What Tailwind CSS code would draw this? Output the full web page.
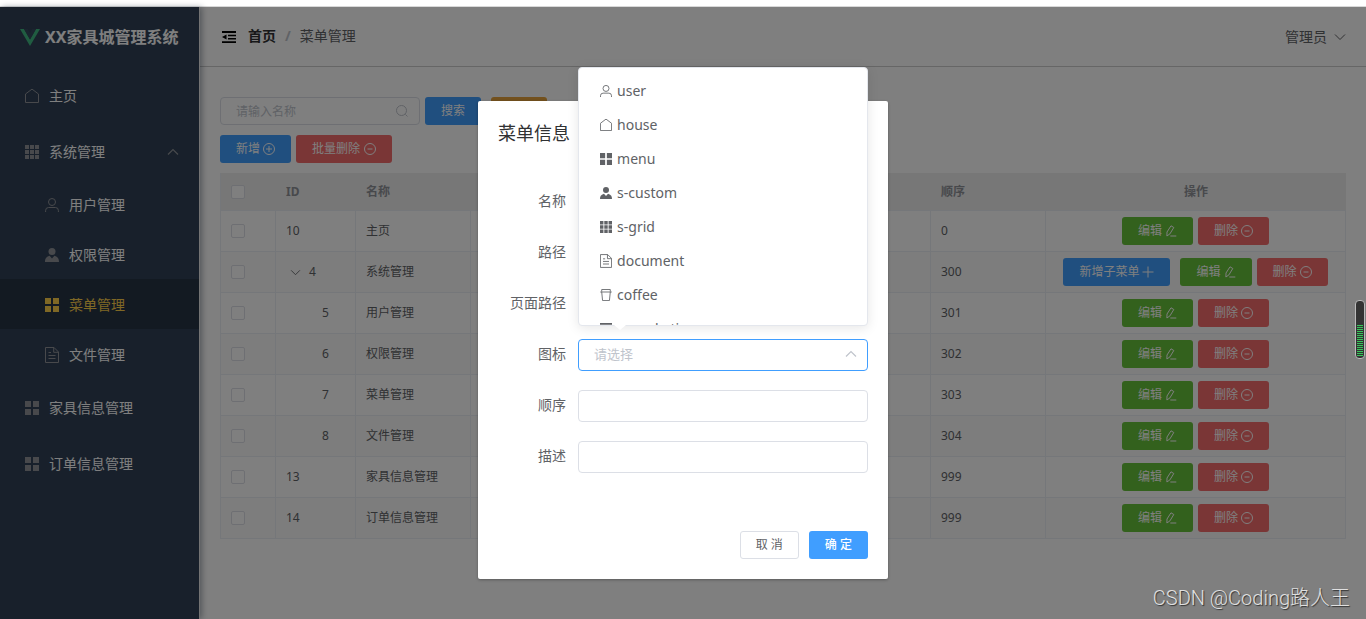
<!DOCTYPE html>
<html lang="zh-CN">
<head>
<meta charset="utf-8">
<meta name="viewport" content="width=device-width, initial-scale=1">
<title>XX家具城管理系统</title>
<script src="https://cdn.jsdelivr.net/npm/@tailwindcss/browser@4"></script>
</head>
<body class="flex min-h-screen flex-col bg-white font-['Noto_Sans','Noto_Sans_CJK_SC',sans-serif] text-sm text-[#606266]">

<svg class="hidden" aria-hidden="true">
  <symbol id="i-house" viewBox="0 0 14 14"><path d="M.5 13.500V5L7 .1 13.500 5v8.500z" fill="none" stroke="currentColor"/></symbol>
  <symbol id="i-user" viewBox="0 0 14 14"><g fill="none" stroke="currentColor"><circle cx="7" cy="4" r="3.500"/><path d="M.6 14v-1.500a3 3 0 0 1 3-3h6.800a3 3 0 0 1 3 3V14"/></g></symbol>
  <symbol id="i-custom" viewBox="0 0 14 14"><g fill="currentColor"><circle cx="7" cy="3.500" r="3.500"/><path d="M0 14c0-3 .8-5 4.600-6.200L7 10.400l2.400-2.600C13.200 9 14 11 14 14z"/></g></symbol>
  <symbol id="i-menu" viewBox="0 0 14 14"><path d="M0 0h6v6H0zM8 0h6v6H8zM0 8h6v6H0zM8 8h6v6H8z" fill="currentColor"/></symbol>
  <symbol id="i-grid" viewBox="0 0 14 14"><path d="M0 0h4v4H0zM5 0h4v4H5zM10 0h4v4h-4zM0 5h4v4H0zM5 5h4v4H5zM10 5h4v4h-4zM0 10h4v4H0zM5 10h4v4H5zM10 10h4v4h-4z" fill="currentColor"/></symbol>
  <symbol id="i-document" viewBox="0 0 14 16"><path d="M.5.5h8.500l4.500 4.500v10.500H.5zM8.700.5V5.300h4.800M3.500 5.500h2.500M3.500 8.500h7M3.500 11.500h7" fill="none" stroke="currentColor"/></symbol>
  <symbol id="i-coffee" viewBox="0 0 14 14"><path d="M.3 3.500h13.400M2 3.200V.6h10v2.600M2 3.500l1 10h8l1-10" fill="none" stroke="currentColor"/></symbol>
  <symbol id="i-marketing" viewBox="0 0 14 14"><path d="M0 0h14v2H0zM1 3h12v8H8l2 3H8.500L7 12l-1.500 2H4l2-3H1z" fill="currentColor"/></symbol>
  <symbol id="i-fold" viewBox="0 0 14 12"><path d="M0 0h14v2H0zM6 3.700h8v1.500H6zM6 7h8v1.500H6zM0 10.200h14v1.800H0zM0 6l4.500-2.600v5.200z" fill="currentColor"/></symbol>
  <symbol id="i-down" viewBox="0 0 12 8"><path d="m1 1.500 5 5 5-5" fill="none" stroke="currentColor"/></symbol>
  <symbol id="i-up" viewBox="0 0 12 8"><path d="m1 6.500 5-5 5 5" fill="none" stroke="currentColor" stroke-width="1.200"/></symbol>
  <symbol id="i-search" viewBox="0 0 12 12"><path d="M9.400 9.400 11.500 11.500M10.500 5.500a5 5 0 1 1-10 0 5 5 0 0 1 10 0z" fill="none" stroke="currentColor"/></symbol>
  <symbol id="i-plusc" viewBox="0 0 12 12"><path d="M6 3v6M3 6h6M11.500 6a5.500 5.500 0 1 1-11 0 5.500 5.500 0 0 1 11 0z" fill="none" stroke="currentColor"/></symbol>
  <symbol id="i-minusc" viewBox="0 0 12 12"><path d="M3.500 6h5M11.500 6a5.500 5.500 0 1 1-11 0 5.500 5.500 0 0 1 11 0z" fill="none" stroke="currentColor"/></symbol>
  <symbol id="i-plus" viewBox="0 0 12 12"><path d="M6 .5v11M.5 6h11" fill="none" stroke="currentColor"/></symbol>
  <symbol id="i-edit" viewBox="0 0 12 12"><path d="M2 7 6 .8 8.800 2.500 4.900 8.900 1.900 11zM5.300 11h6" fill="none" stroke="currentColor" stroke-linejoin="round"/></symbol>
</svg>

<div class="h-[7px] border-b border-[#d8d8d8]"></div>

<div class="relative flex grow">
  <aside class="relative z-10 w-[200px] shrink-0 border-r border-[#e6e6e6] bg-[#304156] text-white shadow-[2px_0_6px_rgba(0,21,41,0.35)]">
    <div class="flex h-[60px] items-center gap-[5px] pl-5">
      <svg class="h-5 w-5" viewBox="0 0 20 20"><path d="M0 2h4l6 10.500L16 2h4L10 19z" fill="#41b883"/><path d="M4 2h3.700L10 6l2.300-4H16l-6 10.500z" fill="#35495e"/></svg>
      <h1 class="text-base font-bold whitespace-nowrap">XX家具城管理系统</h1>
    </div>
    <nav id="menu" aria-label="主菜单"></nav>
  </aside>

  <div class="flex min-w-0 grow flex-col">
    <header class="flex h-[60px] items-center border-b border-[#ccc] px-5 text-[#606266]">
      <button type="button" aria-label="折叠菜单" class="flex w-7 pl-0.5 text-black"><svg class="h-3 w-3.5"><use href="#i-fold"/></svg></button>
      <nav class="flex items-center pb-0.5" aria-label="面包屑">
        <a href="#" class="font-bold text-[#303133]">首页</a>
        <span class="px-[9px] font-bold text-[#c0c4cc]">/</span>
        <span>菜单管理</span>
      </nav>
      <button type="button" class="ml-auto flex items-center gap-[7px]">管理员<svg class="h-2 w-3"><use href="#i-down"/></svg></button>
    </header>

    <main class="px-5 pt-[30px]">
      <div class="flex items-center text-xs text-white">
        <div class="relative w-[200px]">
          <input aria-label="名称" placeholder="请输入名称" class="block h-7 w-full rounded border border-[#dcdfe6] bg-white px-[15px] text-xs placeholder:text-[#c0c4cc]">
          <svg class="absolute top-2 right-3 h-3 w-3 text-[#c0c4cc]"><use href="#i-search"/></svg>
        </div>
        <button type="button" class="ml-[5px] h-7 rounded-[3px] bg-[#409eff] px-4">搜索</button>
        <button type="button" class="ml-2.5 h-7 rounded-[3px] bg-[#e6a23c] px-4">重置</button>
      </div>
      <div class="mt-2.5 flex gap-[5px] text-xs text-white">
        <button type="button" class="flex h-7 items-center gap-[3px] rounded-[3px] bg-[#409eff] px-4">新增<svg class="h-3 w-3"><use href="#i-plusc"/></svg></button>
        <button type="button" class="flex h-7 items-center gap-1 rounded-[3px] bg-[#f56c6c] px-4">批量删除<svg class="h-3 w-3"><use href="#i-minusc"/></svg></button>
      </div>
      <table class="mt-2.5 w-full table-fixed border-separate border-spacing-0 border-l border-[#ebeef5] text-left text-xs">
        <colgroup><col class="w-[55px]"><col class="w-20"><col><col><col><col><col><col><col class="w-[300px]"></colgroup>
        <thead>
          <tr class="h-[38px] bg-[#eee] text-[#909399] [&>th]:border-b [&>th]:border-[#ebeef5] [&>th]:px-2.5">
            <th><input type="checkbox" aria-label="全选" class="block h-3.5 w-3.5 appearance-none rounded-xs border border-[#dcdfe6] bg-white"></th>
            <th>ID</th><th>名称</th><th>路径</th><th>页面路径</th><th>图标</th><th>描述</th><th>顺序</th><th class="text-center">操作</th>
          </tr>
        </thead>
        <tbody id="rows"></tbody>
      </table>
    </main>
  </div>

  <div class="absolute inset-0 z-20 flex items-start justify-center bg-black/50 pt-[94px]">
    <form role="dialog" aria-labelledby="dlg" class="w-[30%] min-w-96 rounded-xs bg-white p-5 shadow-[0_1px_3px_rgba(0,0,0,0.3)]">
      <h2 id="dlg" class="text-lg leading-6 text-[#303133]">菜单信息</h2>
      <div class="mt-[41px] grid grid-cols-[80px_1fr] items-center gap-y-[19px] [&>label]:pr-3 [&>label]:pb-0.5 [&>label]:text-right">
        <label for="f1">名称</label>
        <input id="f1" class="h-8 w-full rounded border border-[#dcdfe6] px-[15px]">
        <label for="f2">路径</label>
        <input id="f2" class="h-8 w-full rounded border border-[#dcdfe6] px-[15px]">
        <label for="f3">页面路径</label>
        <input id="f3" class="h-8 w-full rounded border border-[#dcdfe6] px-[15px]">
        <label for="f4">图标</label>
        <div class="relative">
          <select id="f4" class="block h-8 w-full appearance-none rounded border border-[#409eff] bg-white px-[15px] pb-0.5 text-[13px] text-[#c0c4cc]"><option>请选择</option></select>
          <svg class="pointer-events-none absolute top-[11px] right-[11px] h-2 w-3 text-[#c0c4cc]"><use href="#i-up"/></svg>
          <div class="absolute bottom-full left-0 mb-[13px] w-full rounded border border-[#e4e7ed] bg-white shadow-[0_2px_12px_rgba(0,0,0,0.1)]">
            <ul id="options" role="listbox" aria-label="图标" class="h-[257px] overflow-hidden pt-1.5"></ul>
            <svg class="absolute top-full left-[35px] h-[6px] w-3" viewBox="0 0 12 6"><path d="M0 0h12L6 5z" fill="#fff"/></svg>
          </div>
        </div>
        <label for="f5">顺序</label>
        <input id="f5" class="h-8 w-full rounded border border-[#dcdfe6] px-[15px]">
        <label for="f6">描述</label>
        <input id="f6" class="h-8 w-full rounded border border-[#dcdfe6] px-[15px]">
      </div>
      <div class="mt-[58px] flex justify-end gap-2.5 text-xs">
        <button type="button" class="h-7 rounded-[3px] border border-[#dcdfe6] px-[15px]">取 消</button>
        <button type="button" class="h-7 rounded-[3px] bg-[#409eff] px-4 font-medium text-white">确 定</button>
      </div>
    </form>
  </div>

  <div class="absolute top-[293px] right-px z-30 flex h-[59px] w-2.5 flex-col justify-end rounded border border-[#bbb] bg-[#333] p-px">
    <div class="h-8 bg-[repeating-linear-gradient(to_bottom,#34c759_0_1px,#333_1px_2px)]"></div>
  </div>
  <p class="absolute right-4 bottom-[7px] z-30 font-[Roboto,'Noto_Sans_CJK_SC',sans-serif] text-xl leading-7 font-light text-[#e0e0e0] [text-shadow:1px_1px_1px_#333]">CSDN @Coding路人王</p>
</div>

<script>
const icon = (name, cls) => `<svg class="${cls}"><use href="#i-${name}"/></svg>`;

const menu = [
  ['house', '主页'], ['grid', '系统管理', 'open'],
  ['user', '用户管理', 'sub'], ['custom', '权限管理', 'sub'], ['menu', '菜单管理', 'active'], ['document', '文件管理', 'sub'],
  ['menu', '家具信息管理'], ['menu', '订单信息管理']
];
document.getElementById('menu').innerHTML = menu.map(([ic, text, kind]) => {
  const box = kind === 'active' ? 'h-[50px] pl-[45px] bg-[#263445] text-[#ffd04b]' : kind === 'sub' ? 'h-[50px] pl-[45px]' : 'h-14 pl-[25px]';
  const size = ic === 'document' ? 'h-4 w-3.5' : 'h-3.5 w-3.5';
  return `<a href="#" class="flex items-center gap-2.5 pt-0.5 pr-5 ${box}">${icon(ic, kind === 'active' ? size : size + ' text-[#909399]')}<span>${text}</span>${kind === 'open' ? icon('up', 'ml-auto h-2 w-3 text-[#909399]') : ''}</a>`;
}).join('');

const rows = [
  [10, '主页', 0, ''], [4, '系统管理', 300, 'parent'], [5, '用户管理', 301, 'child'], [6, '权限管理', 302, 'child'],
  [7, '菜单管理', 303, 'child'], [8, '文件管理', 304, 'child'], [13, '家具信息管理', 999, ''], [14, '订单信息管理', 999, '']
];
document.getElementById('rows').innerHTML = rows.map(([id, name, order, kind], i) => {
  const idCell = kind === 'parent' ? `<span class="flex items-center gap-2 pl-1">${icon('down', 'h-[7px] w-[11px]')}${id}</span>` : `<span class="${kind ? 'pl-9' : ''}">${id}</span>`;
  const add = kind === 'parent' ? `<button type="button" class="mr-[5px] flex h-7 items-center gap-[3px] rounded-[3px] bg-[#409eff] px-4">新增子菜单${icon('plus', 'h-3 w-3')}</button>` : '';
  return `<tr class="h-[41px] ${i % 2 ? 'bg-[#fafafa]' : 'bg-white'} [&>td]:border-r [&>td]:border-b [&>td]:border-[#ebeef5] [&>td]:px-2.5">
    <td><input type="checkbox" aria-label="选择${name}" class="block h-3.5 w-3.5 appearance-none rounded-xs border border-[#dcdfe6] bg-white"></td>
    <td>${idCell}</td><td>${name}</td><td></td><td></td><td></td><td></td><td>${order}</td>
    <td><div class="flex justify-center gap-[5px] text-white">${add}
      <button type="button" class="flex h-7 items-center gap-[3px] rounded-[3px] bg-[#67c23a] px-4">编辑${icon('edit', 'h-3 w-3')}</button>
      <button type="button" class="flex h-7 items-center gap-[3px] rounded-[3px] bg-[#f56c6c] px-4">删除${icon('minusc', 'h-3 w-3')}</button>
    </div></td></tr>`;
}).join('');

const options = [['user', 'user'], ['house', 'house'], ['menu', 'menu'], ['custom', 's-custom'], ['grid', 's-grid'], ['document', 'document'], ['coffee', 'coffee'], ['marketing', 's-marketing']];
document.getElementById('options').innerHTML = options.map(([ic, text]) =>
  `<li role="option" class="flex h-[34px] items-center gap-[5px] pl-[21px]">${icon(ic, ic === 'document' ? 'h-3.5 w-3' : 'h-3 w-3')}${text}</li>`).join('');
</script>
</body>
</html>
